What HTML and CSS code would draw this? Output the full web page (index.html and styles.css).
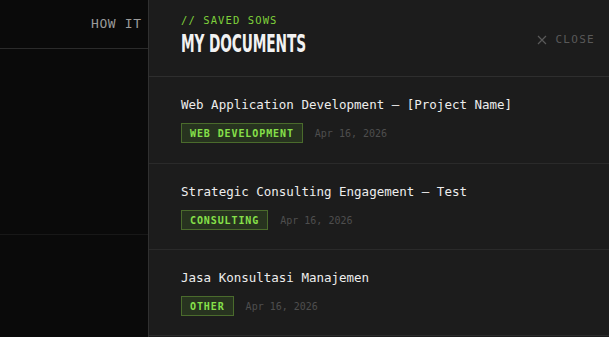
FILE: index.html
```html
<!DOCTYPE html>
<html lang="en">
<head>
    <meta charset="UTF-8">
    <meta name="viewport" content="width=device-width, initial-scale=1.0">
    <title>My Documents</title>
    <link rel="stylesheet" href="styles.css">
</head>
<body>
    <div class="page">
        <nav class="site-nav">
            <a class="nav-link" href="#">HOW IT WORKS</a>
        </nav>
        <section class="hero"></section>
        <section class="hero-below"></section>
    </div>

    <aside class="drawer">
        <header class="drawer-head">
            <div>
                <div class="drawer-label">// SAVED SOWS</div>
                <h2 class="drawer-title">MY DOCUMENTS</h2>
            </div>
            <button class="close-btn">
                <svg width="10" height="10" viewBox="0 0 10 10"><path d="M1 1L9 9M9 1L1 9" stroke="currentColor" stroke-width="1.2" fill="none"/></svg>
                CLOSE
            </button>
        </header>

        <ul class="doc-list">
            <li class="doc">
                <div class="doc-title">Web Application Development — [Project Name]</div>
                <div class="doc-meta">
                    <span class="tag">WEB DEVELOPMENT</span>
                    <span class="doc-date">Apr 16, 2026</span>
                </div>
            </li>
            <li class="doc">
                <div class="doc-title">Strategic Consulting Engagement — Test</div>
                <div class="doc-meta">
                    <span class="tag">CONSULTING</span>
                    <span class="doc-date">Apr 16, 2026</span>
                </div>
            </li>
            <li class="doc">
                <div class="doc-title">Jasa Konsultasi Manajemen</div>
                <div class="doc-meta">
                    <span class="tag">OTHER</span>
                    <span class="doc-date">Apr 16, 2026</span>
                </div>
            </li>
        </ul>
    </aside>
</body>
</html>
```

FILE: styles.css
```css
html, body {
    margin: 0;
    padding: 0;
    height: 100%;
    overflow: hidden;
}
body {
    background: #0a0a0a;
    font-family: "DejaVu Sans Mono", "Liberation Mono", monospace;
    color: #e8e8e8;
}
.page {
    min-height: 100vh;
}
.site-nav {
    height: 49px;
    border-bottom: 1px solid #2b2b2b;
    box-sizing: border-box;
    padding: 13px 0 0 91px;
    white-space: nowrap;
}
.nav-link {
    color: #9a9a9a;
    text-decoration: none;
    font-size: 13px;
    letter-spacing: 0.6px;
}
.hero {
    height: 185px;
    border-bottom: 1px solid #181818;
}
.drawer {
    position: fixed;
    top: 0;
    right: 0;
    bottom: 0;
    width: 461px;
    background: #1c1c1c;
    border-left: 1px solid #303030;
    box-sizing: border-box;
}
.drawer-head {
    display: flex;
    justify-content: space-between;
    align-items: flex-start;
    padding: 14px 14px 20px 32px;
    height: 77px;
    box-sizing: border-box;
    border-bottom: 1px solid #2e2e2e;
}
.drawer-label {
    color: #7fd13b;
    font-size: 10.5px;
    line-height: 12px;
    letter-spacing: 1.1px;
}
.drawer-title {
    margin: 6px 0 0;
    font-family: "DejaVu Sans", sans-serif;
    font-stretch: condensed;
    font-weight: bold;
    font-size: 25px;
    line-height: 24px;
    color: #f2f2f2;
    letter-spacing: -0.2px;
    transform: scaleX(0.61);
    transform-origin: left center;
    white-space: nowrap;
}
.close-btn {
    margin-top: 19px;
    background: none;
    border: none;
    padding: 0;
    display: flex;
    align-items: center;
    gap: 8px;
    color: #595959;
    font-family: "DejaVu Sans Mono", "Liberation Mono", monospace;
    font-size: 11px;
    letter-spacing: 1.3px;
    cursor: pointer;
}
.doc-list {
    list-style: none;
    margin: 0;
    padding: 0;
}
.doc {
    padding: 20px 0 19px 32px;
    border-bottom: 1px solid #2a2a2a;
}
.doc:first-child {
    padding-bottom: 20px;
}
.doc-title {
    font-size: 12.5px;
    line-height: 16px;
    color: #ededed;
    white-space: nowrap;
}
.doc-meta {
    margin-top: 10px;
    display: flex;
    align-items: center;
    gap: 12px;
}
.tag {
    height: 20px;
    box-sizing: border-box;
    display: inline-flex;
    align-items: center;
    padding: 0 8px;
    border: 1px solid #4a6b2c;
    background: #27331f;
    color: #86e04a;
    font-size: 10px;
    font-weight: bold;
    letter-spacing: 0.9px;
}
.doc-date {
    color: #4e4e4e;
    font-size: 10px;
}
```
